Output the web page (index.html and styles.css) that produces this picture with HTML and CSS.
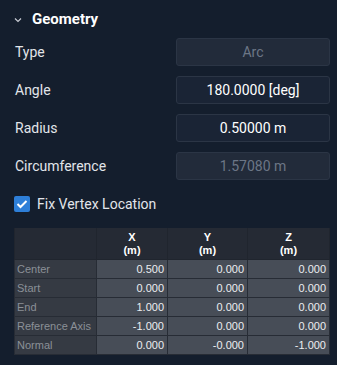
FILE: index.html
```html
<!DOCTYPE html>
<html>
<head>
<meta charset="utf-8">
<link rel="stylesheet" href="styles.css">
</head>
<body>
<div class="panel">
  <div class="header">
    <svg class="chev" width="8" height="6" viewBox="0 0 8 6"><path d="M1 1.5 L4 4.5 L7 1.5" fill="none" stroke="#c8ccd4" stroke-width="1.2"/></svg>
    <span class="title">Geometry</span>
  </div>
  <div class="row"><span class="label">Type</span><div class="input disabled">Arc</div></div>
  <div class="row"><span class="label">Angle</span><div class="input">180.0000 [deg]</div></div>
  <div class="row"><span class="label">Radius</span><div class="input">0.50000 m</div></div>
  <div class="row"><span class="label">Circumference</span><div class="input disabled">1.57080 m</div></div>
  <div class="check">
    <span class="box"><svg width="12" height="10" viewBox="0 0 12 10"><path d="M1.5 5 L4.5 8 L10.5 2" fill="none" stroke="#fff" stroke-width="2"/></svg></span>
    <span class="checklabel">Fix Vertex Location</span>
  </div>
  <table class="grid">
    <colgroup><col class="c0"><col class="c1"><col class="c2"><col class="c3"></colgroup>
    <thead>
      <tr><th></th><th>X<br>(m)</th><th>Y<br>(m)</th><th>Z<br>(m)</th></tr>
    </thead>
    <tbody>
      <tr><td class="rl">Center</td><td>0.500</td><td>0.000</td><td>0.000</td></tr>
      <tr><td class="rl">Start</td><td>0.000</td><td>0.000</td><td>0.000</td></tr>
      <tr><td class="rl">End</td><td>1.000</td><td>0.000</td><td>0.000</td></tr>
      <tr><td class="rl">Reference Axis</td><td>-1.000</td><td>0.000</td><td>0.000</td></tr>
      <tr><td class="rl">Normal</td><td>0.000</td><td>-0.000</td><td>-1.000</td></tr>
    </tbody>
  </table>
</div>
</body>
</html>
```
FILE: styles.css
```css
html, body {
  margin: 0;
  padding: 0;
  background: #141e2d;
}
.panel {
  width: 337px;
  height: 365px;
  box-sizing: border-box;
  padding: 0 7px 0 14px;
  display: flex;
  flex-direction: column;
  font-family: Roboto, "Liberation Sans", sans-serif;
  color: #e6e9ee;
  font-size: 14px;
}
.header {
  height: 38px;
  flex: none;
  display: flex;
  align-items: center;
}
.chev {
  margin-right: 10px;
  margin-top: 1px;
}
.title {
  font-weight: bold;
  font-size: 15px;
  color: #ffffff;
}
.row {
  display: flex;
  flex: none;
  align-items: center;
  justify-content: space-between;
  height: 28px;
  margin-bottom: 10px;
}
.label {
  padding-left: 1px;
  color: #e2e5ea;
}
.input {
  width: 154px;
  height: 28px;
  box-sizing: border-box;
  border: 1px solid #2b3545;
  border-radius: 3px;
  background: #1a2435;
  display: flex;
  align-items: center;
  justify-content: center;
  color: #ffffff;
}
.input.disabled {
  background: #222b3a;
  color: #6c7686;
}
.check {
  display: flex;
  flex: none;
  align-items: center;
  height: 16px;
  margin-top: 6px;
  margin-bottom: 16px;
}
.box {
  width: 16px;
  height: 16px;
  border-radius: 2px;
  background: #2e7fd8;
  display: flex;
  align-items: center;
  justify-content: center;
  margin-right: 7px;
}
.checklabel {
  color: #e2e5ea;
}
.grid {
  flex: none;
  border-collapse: collapse;
  width: 315px;
  font-family: "Liberation Sans", Arial, sans-serif;
  font-size: 11px;
  table-layout: fixed;
}
.c0 { width: 82px; }
.c1 { width: 71px; }
.c2 { width: 80px; }
.c3 { width: 82px; }
.grid th {
  background: #252a34;
  color: #ffffff;
  font-weight: bold;
  height: 31px;
  padding: 0;
  line-height: 13px;
  font-size: 11px;
  border: 1px solid #20252e;
  border-top: none;
}
.grid td {
  height: 18px;
  padding: 0 3px 0 2px;
  background: #474d57;
  color: #eceef1;
  text-align: right;
  border: 1px solid #272c35;
  white-space: nowrap;
  overflow: hidden;
}
.grid td.rl {
  background: #353a43;
  color: #8b9097;
  text-align: left;
}
```
